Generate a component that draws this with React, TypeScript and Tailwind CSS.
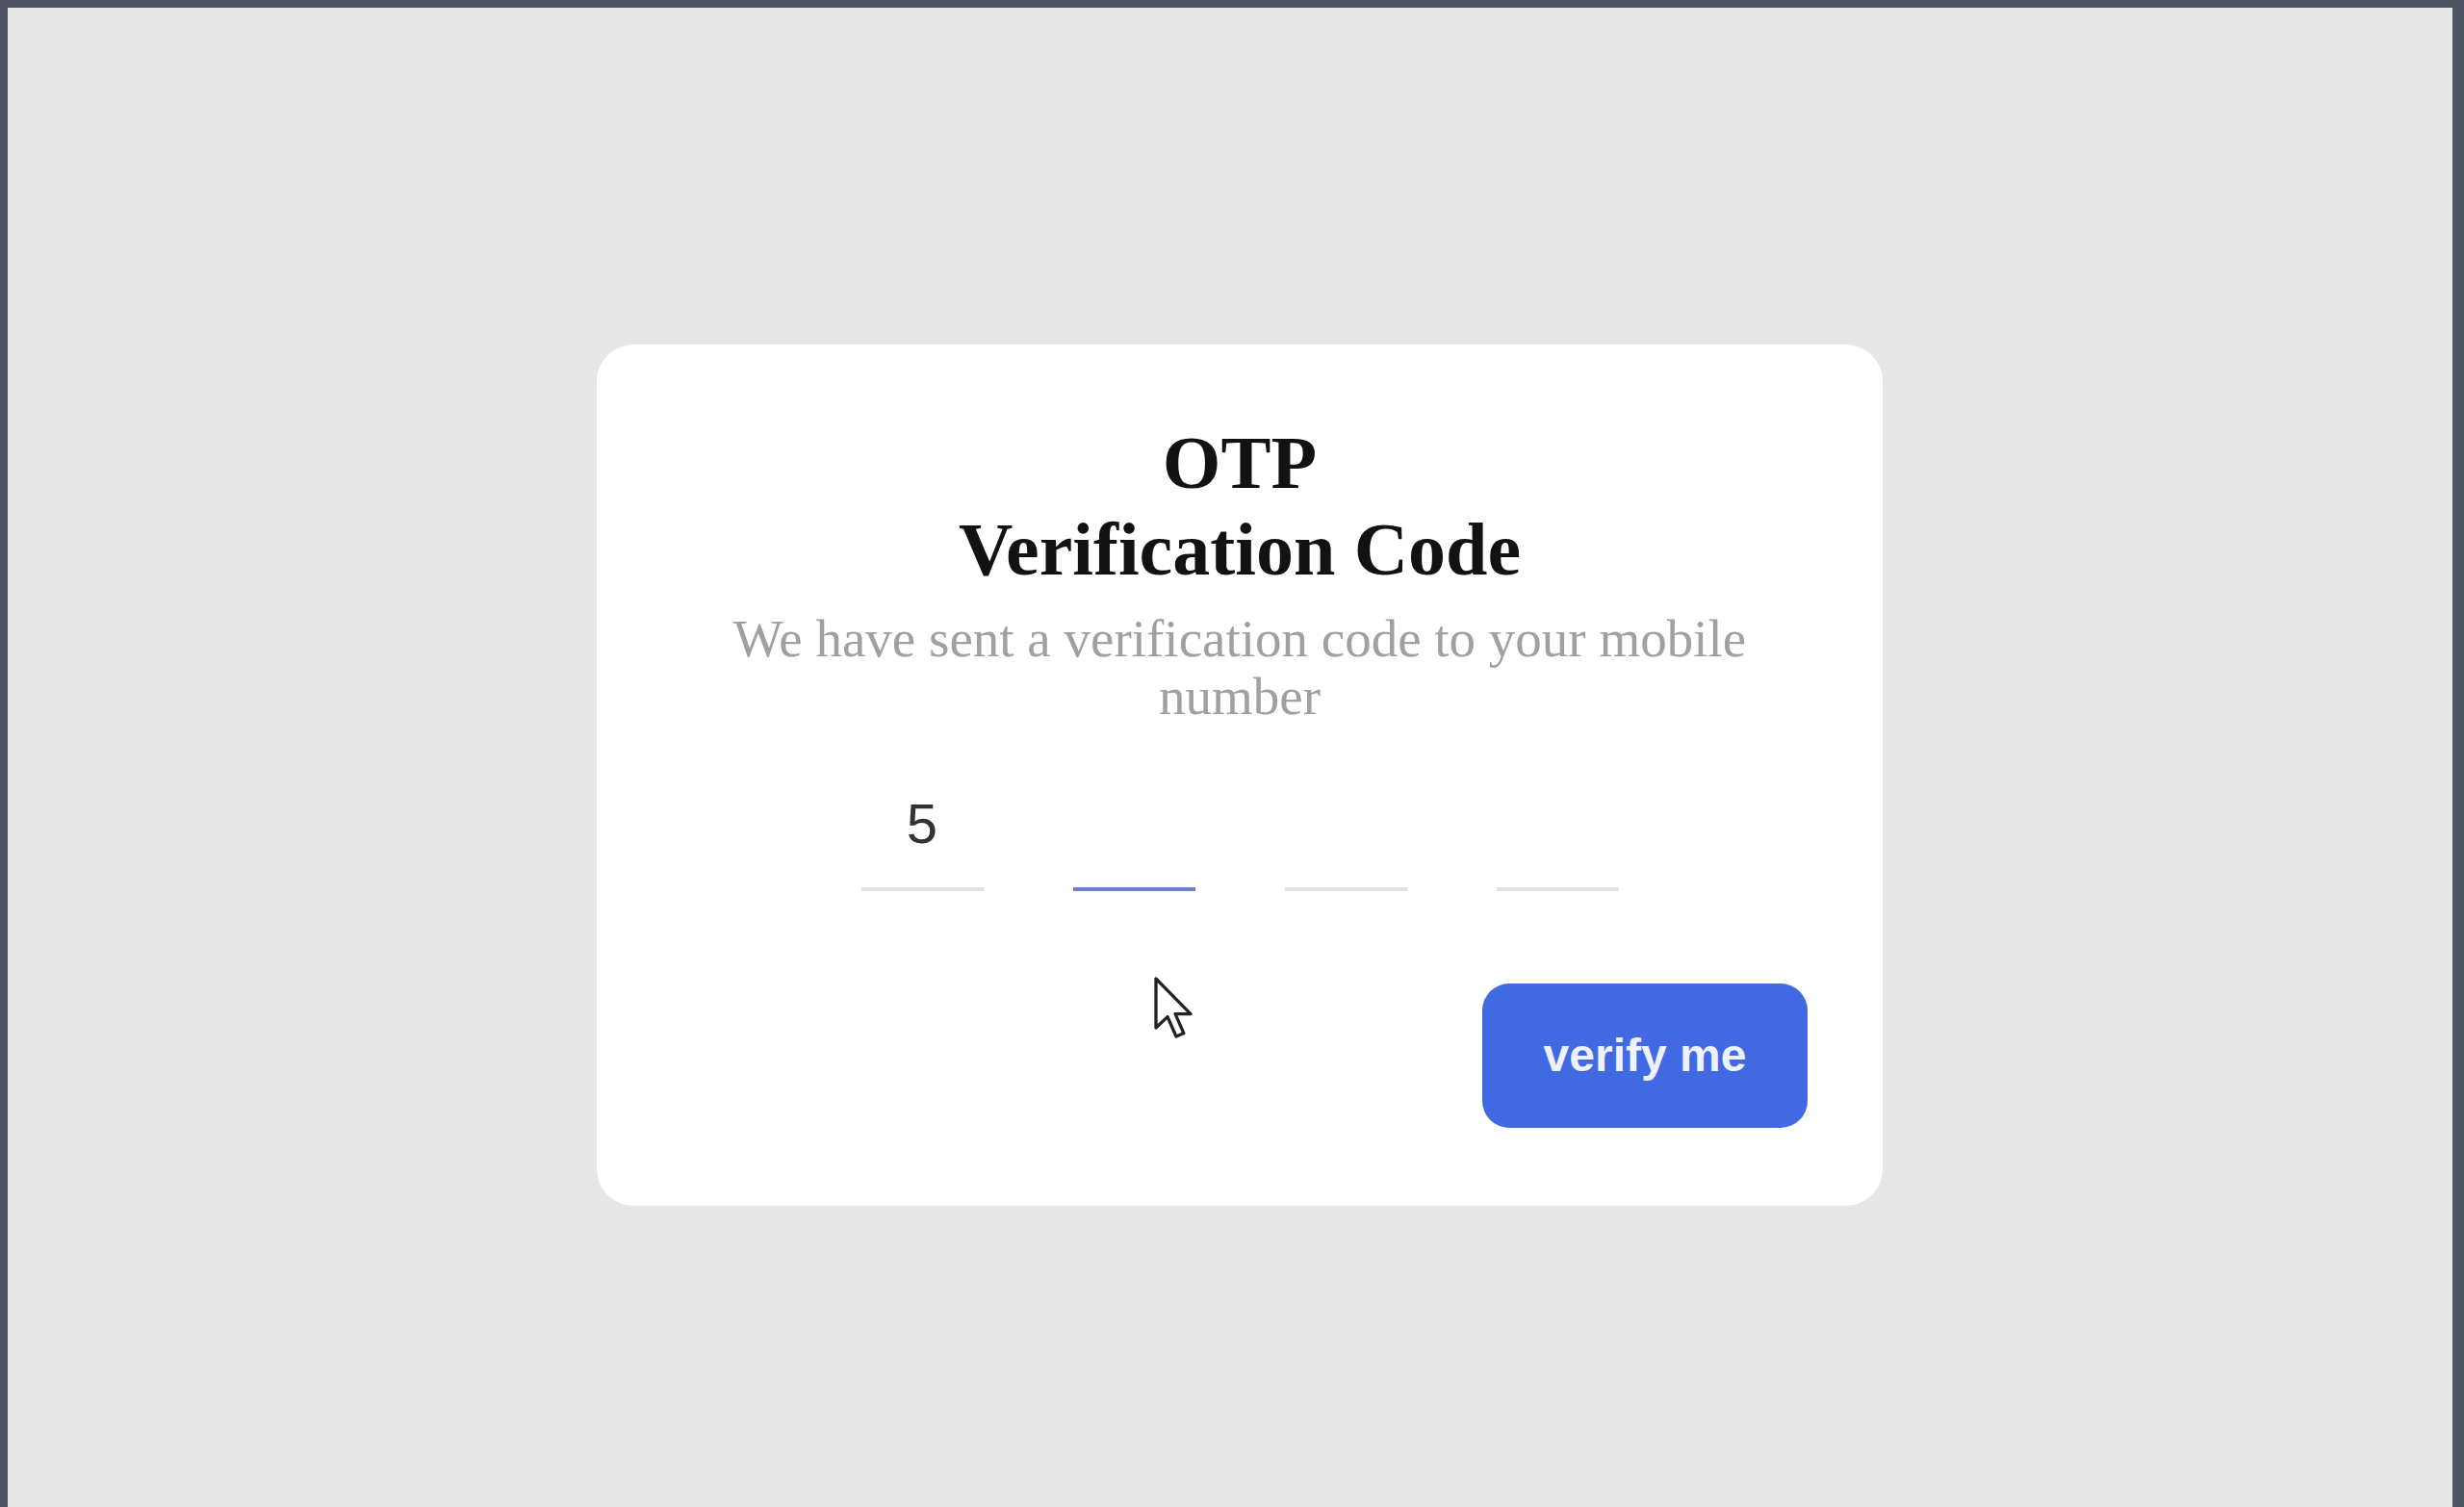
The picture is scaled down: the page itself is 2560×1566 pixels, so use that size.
import React from "react";

function Cursor() {
  return (
    <svg
      className="absolute left-[578px] top-[656px]"
      width="48"
      height="72"
      viewBox="0 0 16 24"
      fill="none"
    >
      <path
        d="M1 1 L1 18 L5 14.2 L8 21 L10.6 19.9 L7.7 13.2 L13 13.2 Z"
        fill="#ffffff"
        stroke="#222222"
        strokeWidth="1.1"
        strokeLinejoin="round"
      />
    </svg>
  );
}

export default function App() {
  const digits = ["5", "", "", ""];
  return (
    <div className="w-[2560px] h-[1566px] bg-[#4f5661] pt-[8px] pl-[8px] pr-[12px] overflow-hidden">
      <div className="w-full h-full bg-[#e6e6e6] pt-[350px] pl-[612px]">
        <div className="relative w-[1336px] h-[895px] bg-white rounded-[38px] p-[78px] flex flex-col">
          <h1
            className="text-center font-bold text-[78px] leading-[90px] text-[#141111]"
            style={{ fontFamily: '"Liberation Serif", "Times New Roman", serif' }}
          >
            OTP
            <br />
            Verification Code
          </h1>
          <p
            className="mt-[18px] text-center text-[55px] leading-[60px] text-[#a0a0a0]"
            style={{ fontFamily: '"Liberation Serif", "Times New Roman", serif' }}
          >
            We have sent a verification code to your mobile number
          </p>
          <div className="mt-[34px] flex justify-center gap-[93px]">
            {digits.map((d, i) => (
              <input
                key={i}
                readOnly
                value={d}
                className={
                  i === 1
                    ? "w-[127px] h-[138px] border-b-[4px] border-[#6f80cf] bg-transparent text-center text-[58px] text-[#333] outline-none"
                    : "w-[127px] h-[138px] border-b-[4px] border-[#e1e1e1] bg-transparent text-center text-[58px] text-[#333] outline-none"
                }
                style={{ fontFamily: '"Liberation Sans", Arial, sans-serif' }}
              />
            ))}
          </div>
          <div className="mt-[96px] flex justify-end">
            <button
              className="w-[338px] h-[150px] rounded-[28px] bg-[#4169e1] text-[#eef2ff] text-[48px] font-bold"
              style={{ fontFamily: '"Liberation Sans", Arial, sans-serif' }}
            >
              verify me
            </button>
          </div>
          <Cursor />
        </div>
      </div>
    </div>
  );
}
